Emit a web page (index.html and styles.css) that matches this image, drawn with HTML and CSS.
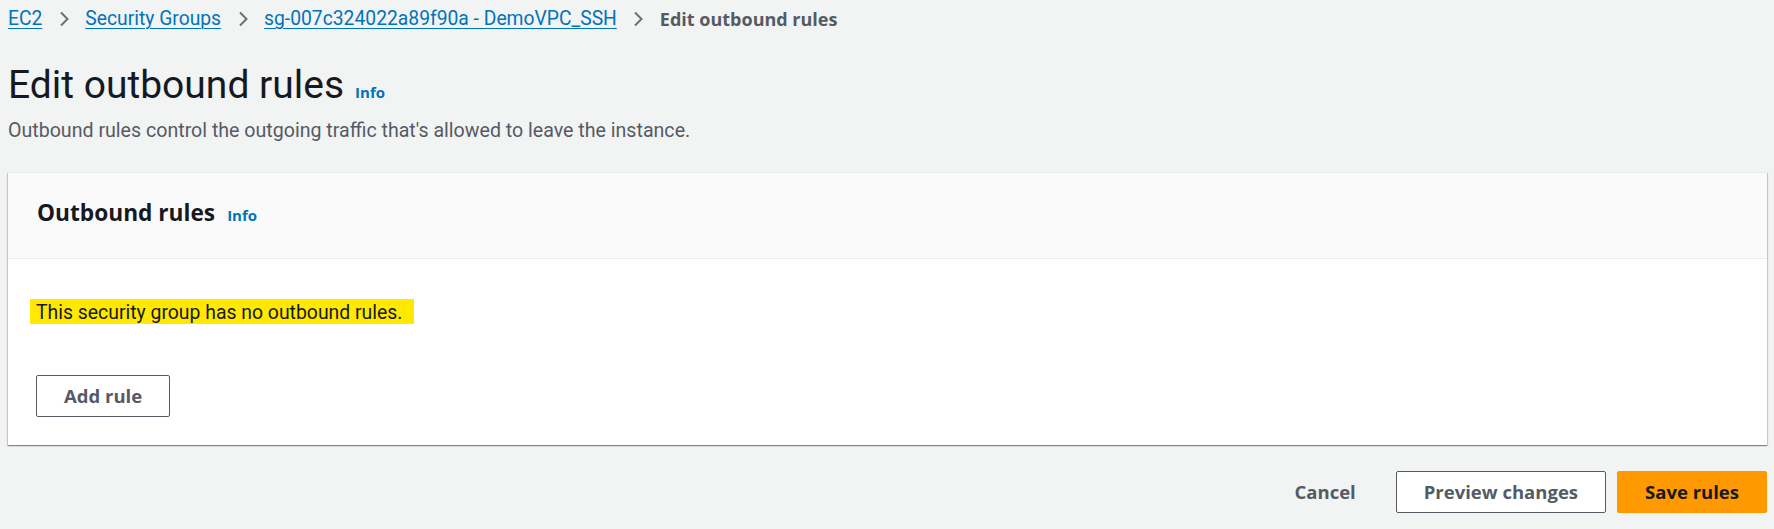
FILE: index.html
```html
<!DOCTYPE html>
<html lang="en">
<head>
<meta charset="utf-8">
<title>Edit outbound rules</title>
<link rel="stylesheet" href="styles.css">
</head>
<body>
<div class="page">
  <nav class="crumbs">
    <a class="crumb-link" href="#">EC2</a>
    <svg class="chev" width="14" height="16" viewBox="0 0 14 16"><path d="M4 1.5 L10.5 8 L4 14.5" fill="none" stroke="#687078" stroke-width="2"/></svg>
    <a class="crumb-link" href="#">Security Groups</a>
    <svg class="chev" width="14" height="16" viewBox="0 0 14 16"><path d="M4 1.5 L10.5 8 L4 14.5" fill="none" stroke="#687078" stroke-width="2"/></svg>
    <a class="crumb-link" href="#">sg-007c324022a89f90a - DemoVPC_SSH</a>
    <svg class="chev" width="14" height="16" viewBox="0 0 14 16"><path d="M4 1.5 L10.5 8 L4 14.5" fill="none" stroke="#687078" stroke-width="2"/></svg>
    <span class="crumb-current">Edit outbound rules</span>
  </nav>

  <div class="title-row">
    <h1 class="title">Edit outbound rules</h1>
    <a class="info" href="#">Info</a>
  </div>
  <p class="desc">Outbound rules control the outgoing traffic that's allowed to leave the instance.</p>

  <section class="card">
    <div class="card-header">
      <h2 class="card-title">Outbound rules</h2>
      <a class="info" href="#">Info</a>
    </div>
    <div class="card-body">
      <div class="empty-row"><span class="highlight">This security group has no outbound rules.</span></div>
      <button class="btn">Add rule</button>
    </div>
  </section>

  <div class="actions">
    <button class="btn-link">Cancel</button>
    <button class="btn">Preview changes</button>
    <button class="btn btn-primary">Save rules</button>
  </div>
</div>
</body>
</html>
```

FILE: styles.css
```css
html, body {
  margin: 0;
  padding: 0;
  background: #f2f3f3;
}

body {
  font-family: Roboto, "Liberation Sans", sans-serif;
  color: #16191f;
}

.page {
  padding: 8px 7px 0 8px;
}

.crumbs {
  display: flex;
  align-items: center;
  height: 22px;
  font-size: 19.3px;
  line-height: 22px;
}

.crumb-link {
  color: #0073bb;
  text-decoration: underline;
  text-decoration-thickness: 1px;
  text-underline-offset: 3px;
}

.chev {
  display: block;
  margin: 0 14.5px;
}

.crumb-current {
  font-family: "Open Sans", sans-serif;
  font-weight: 700;
  font-size: 18px;
  color: #545b64;
}

.title-row {
  display: flex;
  align-items: baseline;
  gap: 11px;
  margin-top: 31px;
}

.title {
  margin: 0;
  font-size: 39px;
  line-height: 48px;
  font-weight: 400;
  color: #16191f;
}

.info {
  font-family: "Open Sans", sans-serif;
  font-weight: 700;
  font-size: 15px;
  color: #0073bb;
  text-decoration: none;
}

.desc {
  margin: 10px 0 0 0;
  font-size: 19.6px;
  line-height: 24px;
  color: #545b64;
}

.card {
  margin-top: 29px;
  background: #ffffff;
  border-top: 1px solid #eaeded;
  box-shadow: 0 1px 1px 0 rgba(0, 28, 36, 0.3), 1px 1px 1px 0 rgba(0, 28, 36, 0.15), -1px 1px 1px 0 rgba(0, 28, 36, 0.15);
}

.card-header {
  display: flex;
  align-items: baseline;
  gap: 12px;
  padding: 25px 29px 30px 29px;
  background: #fafafa;
  border-bottom: 1px solid #eaeded;
}

.card-title {
  margin: 0;
  font-family: "Open Sans", sans-serif;
  font-weight: 700;
  font-size: 22.7px;
  line-height: 30px;
  color: #16191f;
}

.card-body {
  padding: 40px 28px 28px 28px;
}

.empty-row {
  height: 25px;
}

.highlight {
  display: inline-block;
  margin-left: -6px;
  padding: 3px 12px 0 6px;
  height: 22px;
  line-height: 22px;
  font-size: 19.4px;
  background: #ffe900;
  color: #16191f;
}

.btn {
  box-sizing: border-box;
  height: 42px;
  padding: 0 27px;
  margin: 0;
  border: 1px solid #545b64;
  border-radius: 2px;
  background: #ffffff;
  font-family: "Open Sans", sans-serif;
  font-weight: 700;
  font-size: 18.5px;
  line-height: 40px;
  color: #545b64;
  cursor: pointer;
}

.card-body .btn {
  display: block;
  margin-top: 51px;
}

.actions {
  display: flex;
  justify-content: flex-end;
  align-items: center;
  gap: 11px;
  margin-top: 26px;
}

.btn-link {
  box-sizing: border-box;
  height: 42px;
  padding: 0 20px;
  margin-right: 9px;
  border: none;
  background: transparent;
  font-family: "Open Sans", sans-serif;
  font-weight: 700;
  font-size: 18.5px;
  line-height: 42px;
  color: #545b64;
  cursor: pointer;
}

.btn-primary {
  background: #ff9900;
  border-color: #ff9900;
  color: #16191f;
}
```
